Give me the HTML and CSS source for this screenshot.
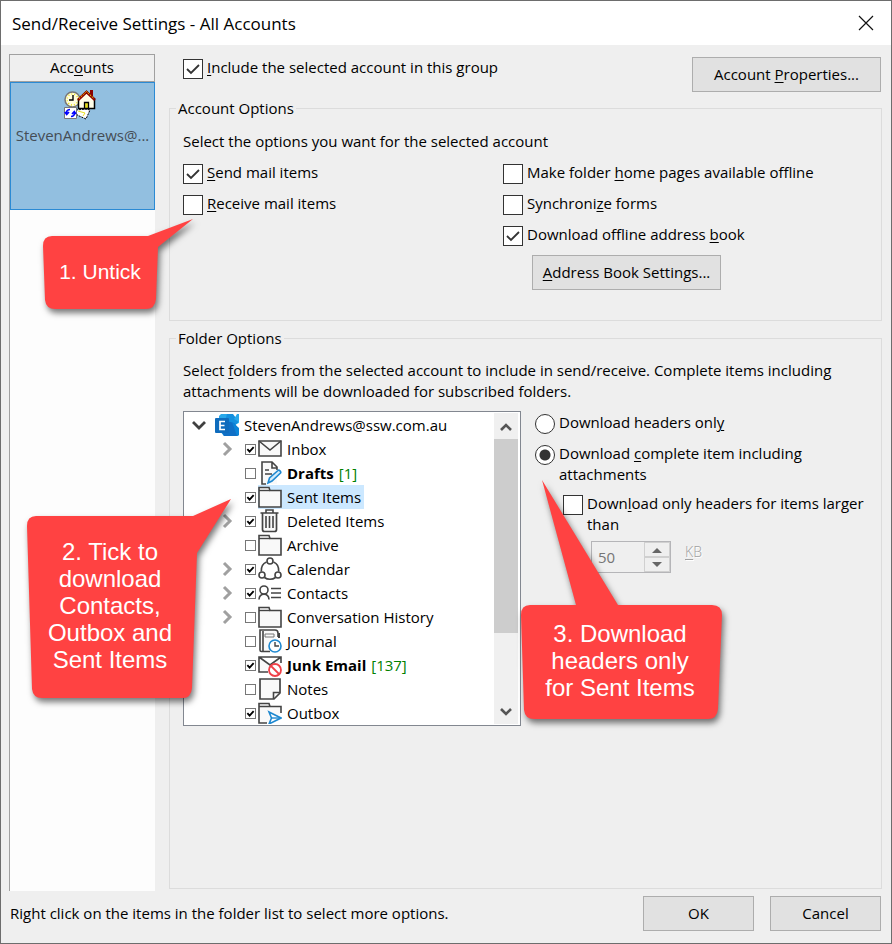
FILE: index.html
```html
<!DOCTYPE html>
<html lang="en">
<head>
<meta charset="utf-8">
<title>Send/Receive Settings - All Accounts</title>
<link rel="stylesheet" href="styles.css">
</head>
<body>
<svg class="defs" aria-hidden="true">
  <symbol id="chevron" viewBox="0 0 12 16"><path d="M3 2l6 6-6 6" fill="none" stroke="#a0a0a0" stroke-width="3"/></symbol>
  <symbol id="folder" viewBox="0 0 24 24"><path d="M1 2.500h10l1 3h11V22H1z" fill="#f9f9f9" stroke="#444" stroke-width="1.600"/><path d="M1 5.500h11" fill="none" stroke="#444" stroke-width="1.400"/></symbol>
</svg>
<main class="dialog">
  <header class="titlebar">
    <h1>Send/Receive Settings - All Accounts</h1>
    <button class="close" type="button" aria-label="Close"><svg viewBox="0 0 16 16"><path d="M1 1l14 14M15 1L1 15" fill="none" stroke="#111" stroke-width="1.200"/></svg></button>
  </header>

  <div class="body">
    <nav class="accounts">
      <h2>Acc<u>o</u>unts</h2>
      <button class="account" type="button">
        <svg viewBox="0 0 38 32">
          <circle cx="8.500" cy="10.500" r="7.500" fill="#fffde0" stroke="#777" stroke-width="1.500"/>
          <circle cx="8.500" cy="10.500" r="5.500" fill="none" stroke="#e8e020" stroke-width="1.500" stroke-dasharray="1 2"/>
          <path d="M9 6v5H5" fill="none" stroke="#000" stroke-width="1.400"/>
          <path d="M12 21l10-1 4 1-4 9-9-4z" fill="#fff" stroke="#000" stroke-dasharray="2 1"/>
          <path d="M14 22l7 2-2 3" fill="none" stroke="#e8e020"/>
          <path d="M26 1h3v9h-3z" fill="#8b0000"/>
          <path d="M14.500 10l8-7.500 8 7.500v9.500h-16z" fill="#fffde8" stroke="#000" stroke-width="1.500"/>
          <path d="M14 11l8.500-8L31 11" fill="none" stroke="#8b0000" stroke-width="2.600"/>
          <path d="M15 9.500L22.500 2.500l7.500 7" fill="none" stroke="#ffe000" stroke-width="1" stroke-dasharray="1.500 1"/>
          <path d="M20.500 13.500h4v6h-4z" fill="#e8e020" stroke="#000" stroke-width="1.300"/>
          <path d="M.5 18.500h12v11H.5z" fill="#fff" stroke="#777"/>
          <path d="M6 20.500c-3 0-3.500 2-3.500 4M.8 23l1.900 2.500L5 23M7 27.500c3 0 3.500-2 3.500-4M8 25l2.300-2.500L12 25" fill="none" stroke="#00f" stroke-width="1.600"/>
        </svg>
        <span>StevenAndrews@...</span>
      </button>
    </nav>

    <div class="settings">
      <div class="toprow">
        <label class="opt"><input type="checkbox" checked><span><u>I</u>nclude the selected account in this group</span></label>
        <button class="btn wide" type="button">Account <u>P</u>roperties...</button>
      </div>

      <fieldset class="account-options">
        <legend>Account Options</legend>
        <p>Select the options you want for the selected account</p>
        <div class="columns">
          <div class="stack">
            <label class="opt"><input type="checkbox" checked><span><u>S</u>end mail items</span></label>
            <label class="opt"><input type="checkbox"><span><u>R</u>eceive mail items</span></label>
          </div>
          <div class="stack">
            <label class="opt"><input type="checkbox"><span>Make folder <u>h</u>ome pages available offline</span></label>
            <label class="opt"><input type="checkbox"><span>Synchroni<u>z</u>e forms</span></label>
            <label class="opt"><input type="checkbox" checked><span>Download offline address <u>b</u>ook</span></label>
            <button class="btn wide book" type="button"><u>A</u>ddress Book Settings...</button>
          </div>
        </div>
      </fieldset>

      <fieldset class="folder-options">
        <legend>Folder Options</legend>
        <p>Select <u>f</u>olders from the selected account to include in send/receive. Complete items including attachments will be downloaded for subscribed folders.</p>
        <div class="folders">
          <div class="tree">
            <ul>
              <li class="root">
                <svg class="open" viewBox="0 0 16 16"><path d="M2 5l6 6 6-6" fill="none" stroke="#404040" stroke-width="2.800"/></svg>
                <svg class="icon" viewBox="0 0 24 24">
                  <path d="M6 1h11v22H9l-5-6V3z" fill="#28a8ea"/><path d="M17 8l7-7v9l-7 3z" fill="#50d9ff"/><path d="M12 1h6l6 8-6 5-8-6z" fill="#1490df"/><path d="M24 1v8l-5-3 3-5z" fill="#28a8ea"/><path d="M12 8l7 2 5 6v6l-2 1H9l-3-5z" fill="#0f6fc6"/><path d="M17 9l7 6v7l-2 1z" fill="#0a84d8"/><rect x="0" y="5" width="14" height="15" rx="1" fill="#0f6cbd"/><path d="M10 8.500H5v8h5M5 12.500h4.500" fill="none" stroke="#fff" stroke-width="1.700"/>
                </svg>
                <span class="name">StevenAndrews@ssw.com.au</span>
              </li>
              <li><svg class="chev"><use href="#chevron"/></svg><label><input type="checkbox" checked><span class="name"><svg class="icon" viewBox="0 0 24 24"><path d="M1 4h22v15H1z" fill="#f9f9f9" stroke="#444" stroke-width="1.600"/><path d="M1 4l11 9 11-9" fill="none" stroke="#444" stroke-width="1.600"/></svg>Inbox</span></label></li>
              <li><span class="chev"></span><label><input type="checkbox"><span class="name"><svg class="icon" viewBox="0 0 24 24"><path d="M4 1h10l5 5v17H4z" fill="#f9f9f9"/><path d="M19 9V6l-5-5H4v22h4M14 1v6h5" fill="none" stroke="#444" stroke-width="1.600"/><path d="M7 9h4M7 13h7" stroke="#444" stroke-width="1.400"/><path d="M10 22l1.500-5L20 9.500c1-1 3.500 1 2.500 2.500L14 20z" fill="#d4ecfb" stroke="#1e88d0" stroke-width="1.600"/></svg><b>Drafts</b> <i>[1]</i></span></label></li>
              <li><span class="chev"></span><label><input type="checkbox" checked><span class="name selected"><svg class="icon"><use href="#folder"/></svg>Sent Items</span></label></li>
              <li><svg class="chev"><use href="#chevron"/></svg><label><input type="checkbox" checked><span class="name"><svg class="icon" viewBox="0 0 24 24"><path d="M4.500 4v16.500c0 1 .6 2 2 2h10c1.400 0 2-1 2-2V4" fill="#f9f9f9" stroke="#444" stroke-width="1.700"/><path d="M2.500 4h18M8 3.500V1h7v2.500M8 7v12M11.500 7v12M15 7v12" fill="none" stroke="#444" stroke-width="1.600"/></svg>Deleted Items</span></label></li>
              <li><span class="chev"></span><label><input type="checkbox"><span class="name"><svg class="icon"><use href="#folder"/></svg>Archive</span></label></li>
              <li><svg class="chev"><use href="#chevron"/></svg><label><input type="checkbox" checked><span class="name"><svg class="icon" viewBox="0 0 24 24"><g fill="none" stroke="#444" stroke-width="1.600"><circle cx="12" cy="4" r="3"/><circle cx="4" cy="18" r="3"/><circle cx="20" cy="18" r="3"/><path d="M8.500 5C5 6.500 3 10 3.300 14.500M15.500 5c3.500 1.500 5.500 5 5.200 9.500M6.500 20.500c3 2.300 8 2.300 11 0"/></g></svg>Calendar</span></label></li>
              <li><svg class="chev"><use href="#chevron"/></svg><label><input type="checkbox" checked><span class="name"><svg class="icon" viewBox="0 0 24 24"><g fill="none" stroke="#444" stroke-width="1.600"><circle cx="6" cy="9" r="4"/><path d="M1 18.500c.5-7 9.500-7 10 0M13 7.500h10M13 12h10M13 16.500h10"/></g></svg>Contacts</span></label></li>
              <li><svg class="chev"><use href="#chevron"/></svg><label><input type="checkbox"><span class="name"><svg class="icon"><use href="#folder"/></svg>Conversation History</span></label></li>
              <li><span class="chev"></span><label><input type="checkbox"><span class="name"><svg class="icon" viewBox="0 0 24 24"><path d="M3 1h15v22H3z" fill="#f9f9f9"/><path d="M12 22.500H3.500c-1 0-1.500-.5-1.500-1.500V1h15c2 0 3 1 3 3v4M5 2v20" fill="none" stroke="#444" stroke-width="1.600"/><path d="M7 5h9v3H7z" fill="none" stroke="#777"/><path d="M21 4v5" stroke="#444" stroke-width="2"/><circle cx="17" cy="17" r="6" fill="#fff" stroke="#1e88d0" stroke-width="1.600"/><path d="M17 13v4h4" fill="none" stroke="#444" stroke-width="1.400"/></svg>Journal</span></label></li>
              <li><span class="chev"></span><label><input type="checkbox" checked><span class="name"><svg class="icon" viewBox="0 0 24 24"><path d="M10 19H1V4h22v6M1 4l11 8 11-8" fill="#f9f9f9" stroke="#444" stroke-width="1.600"/><circle cx="17" cy="17" r="6" fill="#fff" stroke="#f04048" stroke-width="1.800"/><path d="M13 13l8 8" stroke="#f04048" stroke-width="1.800"/></svg><b>Junk Email</b> <i>[137]</i></span></label></li>
              <li><span class="chev"></span><label><input type="checkbox"><span class="name"><svg class="icon" viewBox="0 0 24 24"><path d="M2 2h20v14l-6 6H2z" fill="#f9f9f9" stroke="#444" stroke-width="1.700"/><path d="M22 15.500h-6.500V22" fill="none" stroke="#444" stroke-width="1.600"/></svg>Notes</span></label></li>
              <li><span class="chev"></span><label><input type="checkbox" checked><span class="name"><svg class="icon" viewBox="0 0 24 24"><path d="M9 22H1V2.500h10l1 3h11V12M1 5.500h11" fill="#f9f9f9" stroke="#444" stroke-width="1.600"/><path d="M11 11l12 6-12 6 2.500-6z" fill="#fff" stroke="#1e88d0" stroke-width="1.600"/><path d="M13.500 17H22" stroke="#1e88d0" stroke-width="1.400"/></svg>Outbox</span></label></li>
            </ul>
            <div class="scrollbar">
              <button type="button" aria-label="Scroll up"><svg viewBox="0 0 12 10"><path d="M1 8l5-5 5 5" fill="none" stroke="#555" stroke-width="2.600"/></svg></button>
              <div class="track"><div class="thumb"></div></div>
              <button type="button" aria-label="Scroll down"><svg viewBox="0 0 12 10"><path d="M1 2l5 5 5-5" fill="none" stroke="#555" stroke-width="2.600"/></svg></button>
            </div>
          </div>

          <div class="download">
            <label class="opt"><input type="radio" name="mode"><span>Download headers onl<u>y</u></span></label>
            <label class="opt"><input type="radio" name="mode" checked><span>Download <u>c</u>omplete item including attachments</span></label>
            <label class="opt nested"><input type="checkbox"><span>Down<u>l</u>oad only headers for items larger than</span></label>
            <div class="size">
              <div class="spinner">
                <input id="limit" type="text" value="50" disabled>
                <div class="steps">
                  <button type="button" aria-label="Increase" disabled><svg viewBox="0 0 10 6"><path d="M0 6l5-5 5 5z" fill="#666"/></svg></button>
                  <button type="button" aria-label="Decrease" disabled><svg viewBox="0 0 10 6"><path d="M0 0l5 5 5-5z" fill="#666"/></svg></button>
                </div>
              </div>
              <label for="limit"><u>K</u>B</label>
            </div>
          </div>
        </div>
      </fieldset>
    </div>
  </div>

  <footer class="footer">
    <p>Right click on the items in the folder list to select more options.</p>
    <button class="btn" type="button">OK</button>
    <button class="btn" type="button">Cancel</button>
  </footer>

  <aside class="callout untick">
    <svg viewBox="0 0 152 94"><path d="M10 18H106L151 1 116 29l-2 52q-1 10-10 10H13q-9 0-10-9L1 28q0-10 9-10z" fill="#ff4242"/></svg>
    <p>1. Untick</p>
  </aside>
  <aside class="callout tick">
    <svg viewBox="0 0 206 200"><path d="M10 17H167L205 0 171 54l-5 135q-1 10-9 10H16q-9 0-10-9L1 27q0-10 9-10z" fill="#ff4242"/></svg>
    <p>2. Tick to<br>download<br>Contacts,<br>Outbox and<br>Sent Items</p>
  </aside>
  <aside class="callout headers">
    <svg viewBox="0 0 202 242"><path d="M10 126H56L22 1 98 126h94q10 0 10 10l-4 94q-1 10-10 10H14q-9 0-10-9L1 136q0-10 9-10z" fill="#ff4242"/></svg>
    <p>3. Download<br>headers only<br>for Sent Items</p>
  </aside>
</main>
</body>
</html>
```
FILE: styles.css
```css
* { box-sizing: border-box; }
body, h1, h2, p, ul, fieldset { margin: 0; padding: 0; }
body, button, input {
  font: 15px/21px "Open Sans", "Noto Sans", sans-serif;
  color: #000;
}
ul { list-style: none; }
u { text-underline-offset: 2px; text-decoration-thickness: 1px; }
.defs { position: absolute; width: 0; height: 0; }

.dialog {
  position: relative;
  display: flex;
  flex-direction: column;
  min-height: 100vh;
  border: 1px solid #6d6d6d;
  background: #efefef;
}
.titlebar {
  display: flex;
  align-items: center;
  justify-content: space-between;
  height: 44px;
  padding: 0 17px 0 11px;
  background: #fff;
}
.titlebar h1 { font-size: 17px; font-weight: 400; }
.close { padding: 0; border: 0; background: none; }
.close svg { display: block; width: 16px; height: 16px; }

.body {
  display: flex;
  flex: 1;
  gap: 14px;
  padding: 9px 9px 0 8px;
}
.accounts {
  width: 146px;
  margin-bottom: -2px;
  border-left: 1px solid #a0a0a0;
  background: #fdfdfd;
}
.accounts h2 {
  height: 28px;
  border: 1px solid #a0a0a0;
  border-left: 0;
  background: #efefef;
  font-size: 15px;
  font-weight: 400;
  line-height: 25px;
  text-align: center;
}
.account {
  display: flex;
  flex-direction: column;
  align-items: center;
  gap: 4px;
  width: 100%;
  height: 128px;
  padding: 6px 0 0;
  border: 1px solid #2b8ad4;
  background: #92bfe0;
  color: #454d55;
}
.account svg { width: 38px; height: 32px; }

.settings {
  display: flex;
  flex: 1;
  flex-direction: column;
  gap: 7px;
  min-width: 0;
}
.toprow {
  display: flex;
  justify-content: space-between;
  height: 37px;
  padding: 3px 1px 0 14px;
}
.btn {
  width: 111px;
  height: 35px;
  padding: 0;
  border: 1px solid #adadad;
  background: #e1e1e1;
}
.btn.wide { width: 189px; }

.opt { display: flex; align-items: flex-start; gap: 4px; }
.opt input {
  flex: none;
  appearance: none;
  width: 20px;
  height: 20px;
  margin: 2px 0 0;
  border: 1px solid #333;
  background: #fff;
}
.opt input[type="checkbox"]:checked {
  background: #fff url('data:image/svg+xml,<svg xmlns="http://www.w3.org/2000/svg" viewBox="0 0 18 18"><path d="M3 9l4 4 8-8" fill="none" stroke="%23333" stroke-width="1.800"/></svg>');
}
.opt input[type="radio"] { border-radius: 50%; }
.opt input[type="radio"]:checked {
  background: radial-gradient(circle, #333 5px, #fff 6px);
}

fieldset {
  min-width: 0;
  padding: 0 13px;
  border: 1px solid #dcdcdc;
}
legend { height: 20px; margin-left: -7px; padding: 0 2px; line-height: 20px; }
.account-options { height: 223px; padding-top: 13px; }
.columns {
  display: grid;
  grid-template-columns: 320px 1fr;
  margin-top: 10px;
}
.stack { display: flex; flex-direction: column; gap: 9px; }
.book { margin-left: 29px; }

.folder-options { flex: 1; padding-top: 12px; }
.folders { display: flex; gap: 14px; margin-top: 9px; }
.tree {
  display: flex;
  flex: none;
  width: 338px;
  height: 315px;
  padding: 1px 2px 1px 1px;
  border: 1px solid #828790;
  background: #fff;
}
.tree ul { flex: 1; overflow: hidden; }
.tree li { display: flex; align-items: center; height: 24px; padding-left: 36px; }
.tree .root { gap: 8px; padding-left: 6px; }
.tree .root .name { margin-left: -3px; }
.open { width: 16px; height: 16px; }
.chev { width: 12px; height: 16px; margin-right: 12px; }
.icon { flex: none; width: 24px; height: 24px; }
.tree label { display: flex; align-items: center; gap: 2px; }
.tree label .name {
  display: flex;
  align-items: center;
  gap: 5px;
  height: 24px;
  padding-right: 3px;
}
.tree input {
  appearance: none;
  width: 11px;
  height: 11px;
  margin: 0;
  border: 1px solid #777;
  background: #fff;
}
.tree input:checked {
  background: #fff url('data:image/svg+xml,<svg xmlns="http://www.w3.org/2000/svg" viewBox="0 0 10 10"><path d="M1.500 4.500l2.500 2.800 4.500-5" fill="none" stroke="%23000" stroke-width="2"/></svg>');
}
.tree .selected { background: #cce8ff; }
.tree i { color: #008000; font-style: normal; }
.scrollbar { display: flex; flex-direction: column; width: 24px; background: #f0f0f0; }
.scrollbar button { height: 26px; padding: 0; border: 0; background: none; }
.scrollbar svg { width: 12px; height: 10px; }
.track { flex: 1; }
.thumb { height: 194px; background: #cdcdcd; }

.download {
  display: flex;
  flex: 1;
  flex-direction: column;
  gap: 9px;
  max-width: 340px;
  padding-top: 1px;
}
.nested { margin: -1px 0 0 28px; }
.size { display: flex; gap: 14px; margin: -3px 0 0 56px; }
.size label { color: #a0a0a0; font-size: 14px; font-weight: 300; text-shadow: 1px 1px #fff; }
.spinner { display: flex; width: 80px; height: 32px; border: 1px solid #b5b5b8; }
.spinner input { flex: 1; min-width: 0; padding: 0 6px; border: 0; background: #efefef; color: #757575; }
.steps { display: flex; flex-direction: column; width: 26px; }
.steps button { flex: 1; padding: 0; border: 1px solid #d0d0d0; background: #efefef; line-height: 0; }
.steps svg { width: 10px; height: 6px; }

.footer { display: flex; align-items: center; gap: 16px; padding: 7px 10px 12px 9px; }
.footer p { flex: 1; }

.callout { position: absolute; color: #fff; text-align: center; }
.callout svg { display: block; overflow: visible; filter: drop-shadow(2px 4px 3px #0008); }
.callout p { position: absolute; font: 24px/27px "Liberation Sans", Arial, sans-serif; white-space: nowrap; }
.untick { top: 217px; left: 41px; width: 152px; }
.untick p { top: 40px; left: 0; width: 116px; font-size: 21px; }
.tick { top: 498px; left: 25px; width: 206px; }
.tick p { top: 39px; left: 0; width: 168px; }
.headers { top: 478px; left: 519px; width: 202px; }
.headers p { top: 141px; left: 0; width: 200px; }
```
